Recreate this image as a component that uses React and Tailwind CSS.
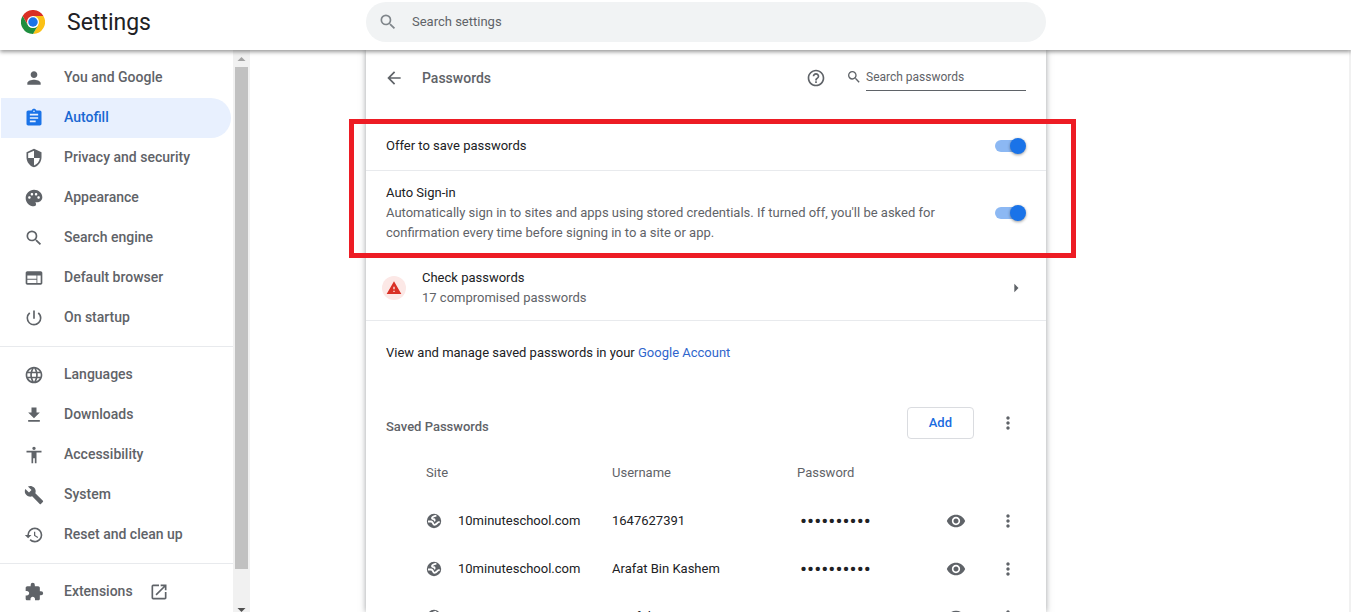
import React, { useState } from "react";
import {
  MdPerson,
  MdAssignment,
  MdPalette,
  MdSearch,
  MdWeb,
  MdPowerSettingsNew,
  MdLanguage,
  MdAccessibility,
  MdBuild,
  MdRestore,
  MdExtension,
  MdOpenInNew,
  MdArrowBack,
  MdHelpOutline,
  MdMoreVert,
  MdVisibility,
  MdArrowRight,
  MdWarning,
} from "react-icons/md";

const ShieldIcon = ({ className }) => (
  <svg viewBox="0 0 24 24" fill="currentColor" className={className}>
    <path d="M12 1L3 5v6c0 5.55 3.84 10.74 9 12 5.16-1.26 9-6.45 9-12V5l-9-4zm0 10.99h7c-.53 4.12-3.28 7.79-7 8.94V12H5V6.3l7-3.11v8.8z" />
  </svg>
);

const DownloadIcon = ({ className }) => (
  <svg viewBox="0 0 24 24" fill="currentColor" className={className}>
    <path d="M19 9h-4V3H9v6H5l7 7 7-7zM5 18v2h14v-2H5z" />
  </svg>
);

// default favicon: dark globe with light oceans
const GlobeIcon = ({ className }) => (
  <svg viewBox="0 0 16 16" fill="none" className={className}>
    <circle cx="8" cy="8" r="7.2" fill="#5f6368" />
    <g stroke="#fff" strokeWidth="1.8" strokeLinejoin="round">
      <path d="M10.400 2.600C8.500 2.900 6.300 3.600 6 5c-.2 1 .9 1 1.900 1.200 1 .3 1 1.300.2 1.900" />
      <path d="M2 8.500h3.200c1.200.1 1.300 1 1.800 1.800.5.900.4 1.600 1.300 1.600 1.700-.1 2.200-.9 2.900-1.700.6-.7 1.400-1.100 2.500-1.300" />
    </g>
  </svg>
);

const ChromeLogo = () => (
  <svg viewBox="0 0 48 48" className="size-6">
    <circle cx="24" cy="24" r="23" fill="#fff" />
    <path d="M24 12h20.8A24 24 0 0 0 3.2 12l10.4 18L24 12z" fill="#d93025" />
    <path d="M34.4 30L24 48A24 24 0 0 0 44.8 12H24l10.4 18z" fill="#fbc116" />
    <path d="M13.6 30L3.2 12A24 24 0 0 0 24 48l10.4-18a12 12 0 0 1-20.8 0z" fill="#1e8e3e" />
    <circle cx="24" cy="24" r="12" fill="#fff" />
    <circle cx="24" cy="24" r="9.5" fill="#1a73e8" />
  </svg>
);

const menuGroups = [
  [
    { label: "You and Google", icon: MdPerson },
    { label: "Autofill", icon: MdAssignment, active: true },
    { label: "Privacy and security", icon: ShieldIcon },
    { label: "Appearance", icon: MdPalette },
    { label: "Search engine", icon: MdSearch },
    { label: "Default browser", icon: MdWeb },
    { label: "On startup", icon: MdPowerSettingsNew },
  ],
  [
    { label: "Languages", icon: MdLanguage },
    { label: "Downloads", icon: DownloadIcon },
    { label: "Accessibility", icon: MdAccessibility },
    { label: "System", icon: MdBuild },
    { label: "Reset and clean up", icon: MdRestore },
  ],
  [{ label: "Extensions", icon: MdExtension, external: true }],
];

const passwords = [
  { id: 1, site: "10minuteschool.com", username: "1647627391" },
  { id: 2, site: "10minuteschool.com", username: "Arafat Bin Kashem" },
  { id: 3, site: "zoom.us", username: "asaiful" },
];

function Toggle({ id, label, checked, onChange }) {
  return (
    <label htmlFor={id} className="relative flex h-4 w-8 shrink-0 cursor-pointer items-center">
      <input
        id={id}
        type="checkbox"
        aria-label={label}
        checked={checked}
        onChange={onChange}
        className="peer absolute inset-0 opacity-0"
      />
      <span className="ml-px h-3 w-7 rounded-full bg-gray-400 peer-checked:bg-[#8cb8f3]" />
      <span className="absolute left-0 size-4 rounded-full bg-white shadow-[0_1px_3px_rgba(0,0,0,0.4)] peer-checked:left-4 peer-checked:bg-[#1a73e8]" />
    </label>
  );
}

function Sidebar() {
  return (
    <div className="flex w-[250px] shrink-0">
      <nav className="min-w-0 flex-1 overflow-hidden pt-2">
        {menuGroups.map((group, i) => (
          <ul key={i} className={i > 0 ? "mt-2 border-t border-[#e8eaed] pt-2" : ""}>
            {group.map(({ label, icon: Icon, active, external }) => (
              <li key={label} className="pl-px pr-0.5">
                <a
                  href="#"
                  className={`flex h-10 items-center rounded-r-full pl-[23px] text-sm font-medium ${
                    active ? "bg-[#e8f0fe] text-[#1967d2]" : "text-[#5f6368]"
                  }`}
                >
                  <Icon className={`size-5 shrink-0 ${active ? "text-[#1a73e8]" : ""}`} />
                  <span className="ml-5 pb-0.5">{label}</span>
                  {external && <MdOpenInNew className="ml-4 size-5" />}
                </a>
              </li>
            ))}
          </ul>
        ))}
      </nav>

      {/* scrollbar */}
      <div className="flex w-[17px] flex-col items-center bg-[#f1f1f1]">
        <svg viewBox="0 0 17 17" className="size-[17px] shrink-0" fill="#a3a3a3">
          <path d="M4.500 11h8L8.500 7z" />
        </svg>
        <div className="w-[13px] flex-1 bg-[#c1c1c1]" />
        <div className="h-[35px] shrink-0" />
        <svg viewBox="0 0 17 8" className="h-2 w-[17px] shrink-0" fill="#505050">
          <path d="M4.500 4h8L8.500 8z" />
        </svg>
      </div>
    </div>
  );
}

export default function App() {
  const [offerSave, setOfferSave] = useState(true);
  const [autoSignIn, setAutoSignIn] = useState(true);

  return (
    <div className="flex h-screen flex-col overflow-hidden bg-white font-[Roboto,sans-serif] text-[13px] leading-5 text-[#202124]">
      {/* top bar */}
      <header className="relative z-20 flex shrink-0 bg-white pt-0.5 pb-2 shadow-[0_2px_4px_rgba(0,0,0,0.4)]">
        <div className="flex w-[366px] shrink-0 items-center pl-[21px]">
          <ChromeLogo />
          <h1 className="ml-[22px] pt-0.5 text-[23px] leading-6">Settings</h1>
        </div>
        <label
          htmlFor="search-settings"
          className="flex h-10 min-w-0 max-w-[680px] flex-1 items-center rounded-full bg-[#f1f3f4] pl-3"
        >
          <MdSearch className="size-5 text-[#80868b]" />
          <input
            id="search-settings"
            type="text"
            placeholder="Search settings"
            aria-label="Search settings"
            className="ml-3.5 flex-1 bg-transparent outline-none placeholder:text-[#5f6368]"
          />
        </label>
      </header>

      <div className="flex min-h-0 flex-1 border-r-2 border-[#f1f1f1]">
        <Sidebar />

        <main className="relative ml-[116px] min-w-0 max-w-[680px] flex-1 bg-white shadow-[0_0_6px_rgba(60,64,67,0.5)]">
          <div className="flex h-14 items-center pl-[18px] pr-5">
            <button aria-label="Back" className="text-[#5f6368]">
              <MdArrowBack className="size-5" />
            </button>
            <h2 className="ml-[18px] flex-1 text-sm font-medium text-[#5f6368]">Passwords</h2>
            <button aria-label="Help" className="text-[#5f6368]">
              <MdHelpOutline className="size-5" />
            </button>
            <label htmlFor="search-passwords" className="ml-5 flex items-center pb-0.5 text-[#5f6368]">
              <MdSearch className="size-4" />
              <input
                id="search-passwords"
                type="text"
                placeholder="Search passwords"
                aria-label="Search passwords"
                className="ml-1 h-7 w-40 border-b border-[#5f6368] bg-transparent text-xs outline-none placeholder:text-[#5f6368]"
              />
            </label>
          </div>

          {/* highlighted settings */}
          <section className="relative mt-4 px-5">
            <div className="pointer-events-none absolute -top-[3px] -right-[30px] bottom-0 -left-[17px] border-[5px] border-[#ed1c24]" />
            <div className="-mx-5 flex h-[49px] items-center justify-between border-b border-[#e8eaed] px-5">
              <span>Offer to save passwords</span>
              <Toggle
                id="offer"
                label="Offer to save passwords"
                checked={offerSave}
                onChange={() => setOfferSave(!offerSave)}
              />
            </div>
            <div className="flex items-center justify-between pt-3 pb-[15px]">
              <div className="max-w-[560px]">
                <div>Auto Sign-in</div>
                <p className="text-[#5f6368]">
                  Automatically sign in to sites and apps using stored credentials. If turned off,
                  you'll be asked for confirmation every time before signing in to a site or app.
                </p>
              </div>
              <Toggle
                id="auto"
                label="Auto Sign-in"
                checked={autoSignIn}
                onChange={() => setAutoSignIn(!autoSignIn)}
              />
            </div>
          </section>

          <button className="flex w-full items-center border-b border-[#e8eaed] pt-2.5 pb-3 pl-4 pr-5 text-left">
            <span className="flex size-6 items-center justify-center rounded-full bg-[#fce8e6]">
              <MdWarning className="size-4 text-[#d93025]" />
            </span>
            <span className="ml-4 flex-1">
              <span className="block">Check passwords</span>
              <span className="block text-[#5f6368]">17 compromised passwords</span>
            </span>
            <MdArrowRight className="size-5 text-[#5f6368]" />
          </button>

          <p className="px-5 pt-[22px]">
            View and manage saved passwords in your{" "}
            <a href="#" className="text-[#2f65cc]">
              Google Account
            </a>
          </p>

          <div className="mt-11 flex items-center pl-5 pr-7">
            <h2 className="flex-1 pt-2 font-medium text-[#5f6368]">Saved Passwords</h2>
            <button className="h-8 rounded border border-[#dadce0] px-[21px] font-medium text-[#1a6be0]">
              Add
            </button>
            <button aria-label="More actions" className="ml-6 text-[#5f6368]">
              <MdMoreVert className="size-5" />
            </button>
          </div>

          <table className="mt-2.5 w-full table-fixed text-left">
            <thead>
              <tr className="h-12 text-[#5f6368]">
                <th className="w-[246px] pl-[60px] font-normal">Site</th>
                <th className="w-[185px] font-normal">Username</th>
                <th className="font-normal">Password</th>
                <th className="w-[100px]" />
              </tr>
            </thead>
            <tbody>
              {passwords.map((p) => (
                <tr key={p.id} className="h-12">
                  <td className="pl-[60px]">
                    <div className="flex items-center">
                      <GlobeIcon className="size-4" />
                      <span className="ml-4">{p.site}</span>
                    </div>
                  </td>
                  <td>{p.username}</td>
                  <td>
                    <input
                      type="password"
                      readOnly
                      value="0123456789"
                      aria-label={`Password for ${p.site}`}
                      className="block h-5 w-24 bg-transparent pl-[3px] text-[21px] leading-5 outline-none"
                    />
                  </td>
                  <td>
                    <div className="flex items-center justify-between pr-7 text-[#5f6368]">
                      <button aria-label="Show password">
                        <MdVisibility className="size-5" />
                      </button>
                      <button aria-label="More actions">
                        <MdMoreVert className="size-5" />
                      </button>
                    </div>
                  </td>
                </tr>
              ))}
            </tbody>
          </table>
        </main>
      </div>
    </div>
  );
}
